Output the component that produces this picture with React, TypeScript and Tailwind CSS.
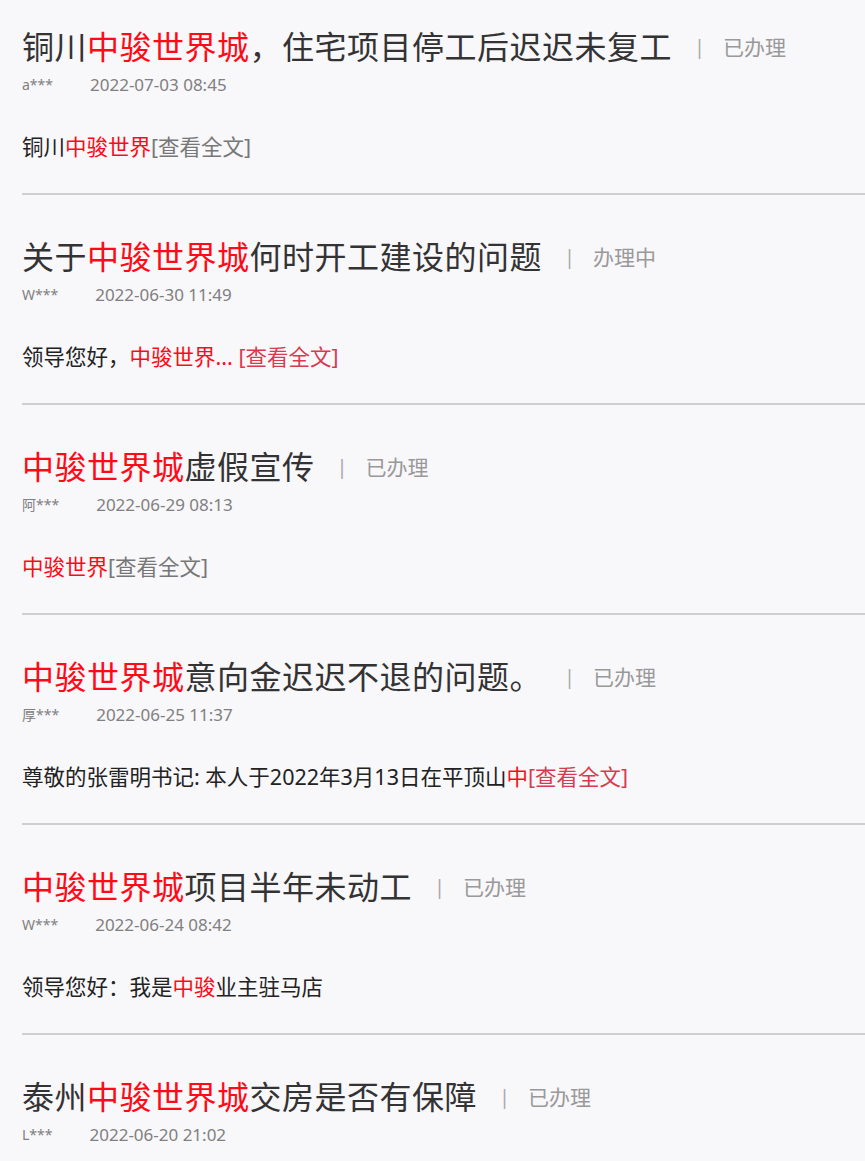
import React from "react";

type Seg = { t: string; c?: "r" | "g" | "l" };
type Item = { title: Seg[]; status: string; user: string; date: string; summary?: Seg[] };

const items: Item[] = [
  {
    title: [{ t: "铜川" }, { t: "中骏世界城", c: "r" }, { t: "，住宅项目停工后迟迟未复工" }],
    status: "已办理",
    user: "a***",
    date: "2022-07-03 08:45",
    summary: [{ t: "铜川" }, { t: "中骏世界", c: "r" }, { t: "[查看全文]", c: "g" }],
  },
  {
    title: [{ t: "关于" }, { t: "中骏世界城", c: "r" }, { t: "何时开工建设的问题" }],
    status: "办理中",
    user: "W***",
    date: "2022-06-30 11:49",
    summary: [{ t: "领导您好，" }, { t: "中骏世界...", c: "r" }, { t: " [查看全文]", c: "l" }],
  },
  {
    title: [{ t: "中骏世界城", c: "r" }, { t: "虚假宣传" }],
    status: "已办理",
    user: "阿***",
    date: "2022-06-29 08:13",
    summary: [{ t: "中骏世界", c: "r" }, { t: "[查看全文]", c: "g" }],
  },
  {
    title: [{ t: "中骏世界城", c: "r" }, { t: "意向金迟迟不退的问题。" }],
    status: "已办理",
    user: "厚***",
    date: "2022-06-25 11:37",
    summary: [
      { t: "尊敬的张雷明书记: 本人于2022年3月13日在平顶山" },
      { t: "中", c: "r" },
      { t: "[查看全文]", c: "l" },
    ],
  },
  {
    title: [{ t: "中骏世界城", c: "r" }, { t: "项目半年未动工" }],
    status: "已办理",
    user: "W***",
    date: "2022-06-24 08:42",
    summary: [{ t: "领导您好：我是" }, { t: "中骏", c: "r" }, { t: "业主驻马店" }],
  },
  {
    title: [{ t: "泰州" }, { t: "中骏世界城", c: "r" }, { t: "交房是否有保障" }],
    status: "已办理",
    user: "L***",
    date: "2022-06-20 21:02",
  },
];

function Segs({ segs }: { segs: Seg[] }) {
  return (
    <>
      {segs.map((s, i) =>
        s.c === "r" ? (
          <span key={i} className="text-[#ff0a16]">{s.t}</span>
        ) : s.c === "g" ? (
          <span key={i} className="text-[#777777]">{s.t}</span>
        ) : s.c === "l" ? (
          <span key={i} className="text-[#d93a4f]">{s.t}</span>
        ) : (
          <span key={i}>{s.t}</span>
        )
      )}
    </>
  );
}

export default function App() {
  return (
    <div
      className="min-h-[1161px] w-full overflow-hidden bg-[#f8f7fa] pt-[27px]"
      style={{ fontFamily: '"Noto Sans", "Noto Sans CJK SC", sans-serif' }}
    >
      {items.map((it, i) => (
        <div key={i} className="ml-[22px]">
          <div className={i < items.length - 1 ? "border-b-2 border-[#cfcfcf] pb-[31px]" : "pb-[31px]"}>
            <div className={i === 0 ? "flex items-center" : "flex items-center pt-[42px]"}>
              <div className="text-[32px] leading-[40px] tracking-[0.5px] text-[#333333] whitespace-nowrap">
                <Segs segs={it.title} />
              </div>
              <span className="ml-[22px] text-[20px] leading-[40px] text-[#aaaaaa]">|</span>
              <span className="ml-[18px] text-[21px] leading-[40px] text-[#999999]">{it.status}</span>
            </div>
            <div className="mt-[8px] flex items-center text-[#808080] leading-[20px]">
              <span className="text-[14px]">{it.user}</span>
              <span className="ml-[37px] text-[17px]">{it.date}</span>
            </div>
            {it.summary && (
              <div className="mt-[37px] text-[21.5px] leading-[30px] text-[#222222] whitespace-nowrap">
                <Segs segs={it.summary} />
              </div>
            )}
          </div>
        </div>
      ))}
    </div>
  );
}
